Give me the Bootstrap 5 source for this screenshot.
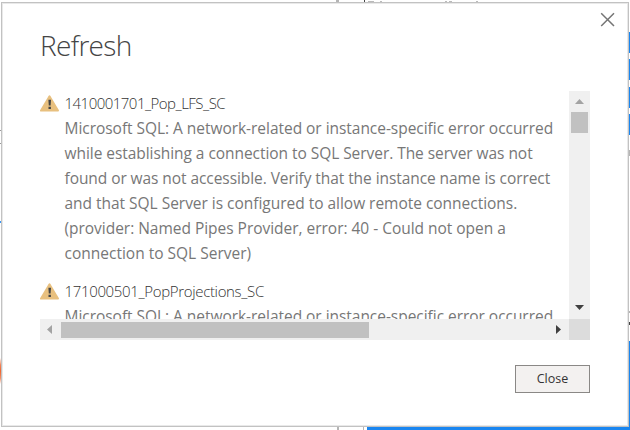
<!DOCTYPE html>
<html lang="en">
<head>
<meta charset="utf-8">
<meta name="viewport" content="width=device-width, initial-scale=1">
<title>Refresh</title>
<link href="https://cdn.jsdelivr.net/npm/bootstrap@5.3.0/dist/css/bootstrap.min.css" rel="stylesheet">
<style>
html, body { height: 430px; overflow: hidden; }
body { font-family: "Open Sans", "Noto Sans", sans-serif; background: #fff; color: #777; }
.page { width: 630px; height: 430px; padding: 2px 1px 3px 1px; }
.backdrop { left: 0; top: 0; width: 630px; height: 430px; }
.dialog { border: 1px solid #c2c2c2; box-shadow: inset 0 0 0 1px #e9e9e9; padding: 0 38px; }
.dismiss { left: 598px; top: 10px; width: 19px; height: 19px; }
.heading { font-size: 28px; font-weight: 300; line-height: 36px; letter-spacing: -.68px; color: #444; margin-top: 24px; }
.viewer { height: 249px; margin-top: 28px; }
.pane { height: 228px; }
.entry + .entry { margin-top: 13px; }
.entry svg { width: 20px; height: 17px; margin-top: 4px; margin-right: 4.5px; }
.line { font-size: 15.5px; line-height: 25px; white-space: nowrap; letter-spacing: -.038px; }
.line.t1 { letter-spacing: -.053px; }
.line.t2 { letter-spacing: -.072px; }
.line.t3 { letter-spacing: -.025px; }
.line.t0 { letter-spacing: 0; }
.line.name { font-size: 15px; font-weight: 300; color: #333; letter-spacing: -.52px; }
.line.name-wide { letter-spacing: -.34px; }
.vbar { width: 21px; background: #f0f0f0; padding: 8px 0 9px; }
.hbar { height: 21px; background: #f0f0f0; padding: 0 8px 0 7px; }
.corner { width: 21px; height: 21px; background: #dcdcdc; }
.vthumb { width: 17px; height: 21px; background: #c1c1c1; margin-top: 8px; }
.hthumb { width: 308px; height: 16px; background: #c1c1c1; margin-left: 9px; }
.close-btn, .close-btn:hover { width: 75px; height: 28px; font-size: 12.5px; color: #333; background: #f3f1f0; border: 1px solid #8a8886; line-height: 1; margin-top: 25px; }
</style>
</head>
<body>
<main class="page position-relative d-flex">
  <svg class="backdrop position-absolute" viewBox="0 0 630 430" aria-hidden="true">
    <path d="M0 130.500h1M0 143.500h1" stroke="#999"/>
    <path d="M0 222h1" stroke="#3a97f5" stroke-width="2"/>
    <path d="M0 358q2 13 0 26z" fill="#f0652f"/>
    <path d="M629 32h1v21h-1zM629 59h1v21h-1zM629 87h1v21h-1zM629 114h1v21h-1zM629 341h1v89h-1zM367 427h263v3H367z" fill="#1a86f0"/>
    <path d="M629 150h1v6h-1zM629 311h1v2h-1zM336 0h3v2h-3zM337 427h2v3h-2zM363 427h1v3h-1z" fill="#b5b5b5"/>
    <path d="M629 322h1v3h-1zM364 0h1v2h-1z" fill="#444"/>
    <path d="M368 1h6v1h-6zM380 1h2v1h-2zM445 1h2v1h-2zM449 1h3v1h-3zM476 1h2v1h-2z" fill="#bbb"/>
  </svg>
  <section class="dialog bg-white flex-grow-1 d-flex flex-column position-relative">
    <h1 class="heading mb-0">Refresh</h1>
    <div class="viewer d-flex flex-column flex-shrink-0">
      <div class="d-flex">
        <div class="pane overflow-hidden flex-grow-1">
          <div class="entry d-flex">
            <svg class="flex-shrink-0" viewBox="0 0 20 17"><path d="M8.400 1.200Q9.500-.6 10.600 1.200L18.800 15Q19.500 16.600 18 16.600H1Q-.5 16.600.2 15Z" fill="#e8c07f"/><path d="M8.400 4.800h2.600l-.4 5.600H8.800zM8.500 11.700h2.400v2.200H8.500z" fill="#444"/></svg>
            <div>
              <div class="line name">1410001701_Pop_LFS_SC</div>
              <div class="line">Microsoft SQL: A network-related or instance-specific error occurred</div>
              <div class="line t1">while establishing a connection to SQL Server. The server was not</div>
              <div class="line t2">found or was not accessible. Verify that the instance name is correct</div>
              <div class="line t3">and that SQL Server is configured to allow remote connections.</div>
              <div class="line t3">(provider: Named Pipes Provider, error: 40 - Could not open a</div>
              <div class="line t0">connection to SQL Server)</div>
            </div>
          </div>
          <div class="entry d-flex">
            <svg class="flex-shrink-0" viewBox="0 0 20 17"><path d="M8.400 1.200Q9.500-.6 10.600 1.200L18.800 15Q19.500 16.600 18 16.600H1Q-.5 16.600.2 15Z" fill="#e8c07f"/><path d="M8.400 4.800h2.600l-.4 5.600H8.800zM8.500 11.700h2.400v2.200H8.500z" fill="#444"/></svg>
            <div>
              <div class="line name name-wide">171000501_PopProjections_SC</div>
              <div class="line">Microsoft SQL: A network-related or instance-specific error occurred</div>
            </div>
          </div>
        </div>
        <div class="vbar d-flex flex-column align-items-center flex-shrink-0">
          <svg width="9" height="5"><path d="M0 5 4.500 0 9 5z" fill="#a3a3a3"/></svg>
          <div class="vthumb"></div>
          <svg class="mt-auto" width="9" height="5"><path d="M0 0h9L4.500 5z" fill="#404040"/></svg>
        </div>
      </div>
      <div class="d-flex">
        <div class="hbar d-flex align-items-center flex-grow-1">
          <svg width="5" height="9"><path d="M5 0v9L0 4.500z" fill="#a3a3a3"/></svg>
          <div class="hthumb"></div>
          <svg class="ms-auto" width="5" height="9"><path d="M0 0v9l5-4.500z" fill="#404040"/></svg>
        </div>
        <div class="corner"></div>
      </div>
    </div>
    <button type="button" class="close-btn btn rounded-0 p-0 align-self-end">Close</button>
  </section>
  <svg class="dismiss position-absolute" viewBox="0 0 19 19" role="button" aria-label="Close"><path d="M3.200 3.200 16 16M16 3.200 3.200 16" stroke="#757575" stroke-width="1.500" fill="none"/></svg>
</main>
<script src="https://cdn.jsdelivr.net/npm/bootstrap@5.3.0/dist/js/bootstrap.bundle.min.js"></script>
</body>
</html>
